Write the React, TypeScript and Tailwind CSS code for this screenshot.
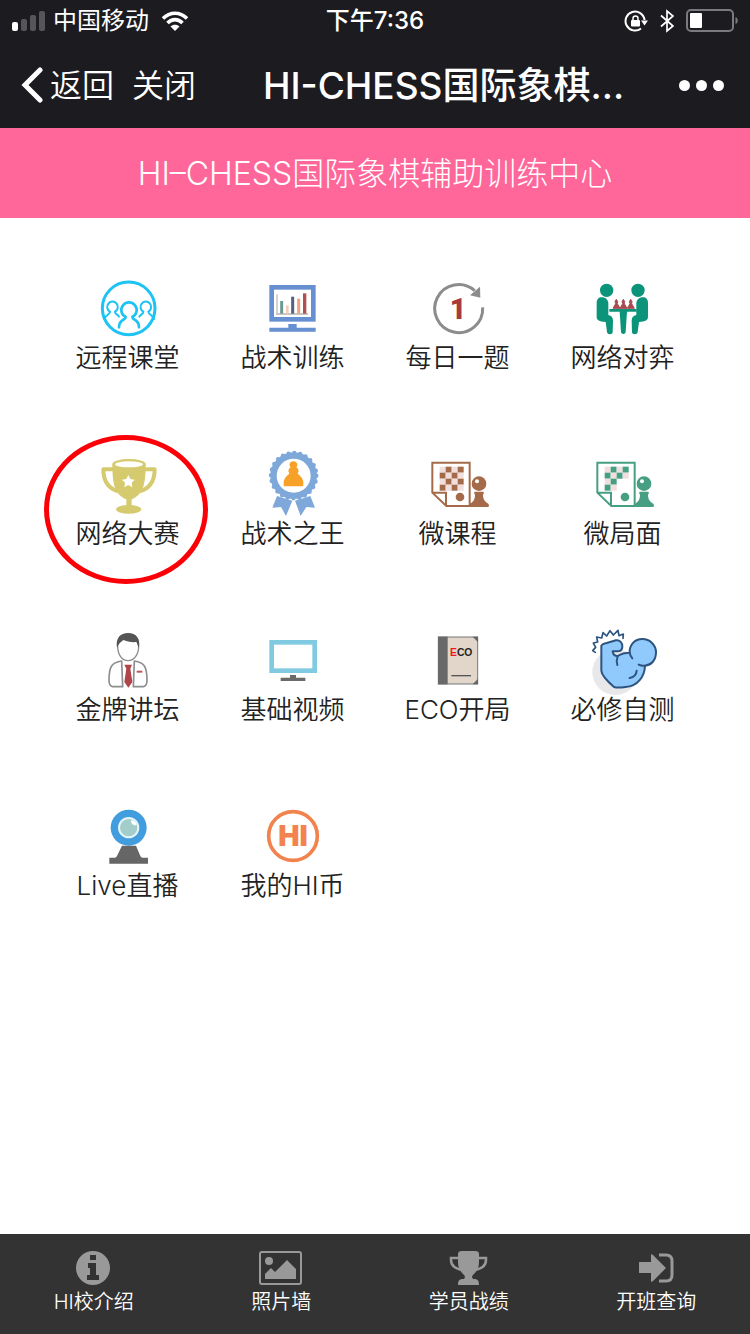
import type { ReactNode } from "react";

interface MenuItem {
  label: string;
  icon: ReactNode;
  marked?: boolean;
}

const BOARD = [0, 1, 2, 3];

function MenuSvg({ children }: { children: ReactNode }) {
  return (
    <svg viewBox="0 0 216 216" className="size-[72px]" fill="none" aria-hidden="true">
      {children}
    </svg>
  );
}

function ClassroomIcon() {
  return (
    <MenuSvg>
      <g stroke="#1cc3f4" strokeLinecap="round">
        <circle cx="110" cy="109" r="79" strokeWidth="9" />
        <g strokeWidth="6">
          <path d="M54 119a16 16 0 1 1 15 0c-1 8 8 7 12 15M54 119c1 8-12 8-17 22" />
          <path d="M154 119a16 16 0 1 1 15 0c-1 8 12 8 17 22M154 119c1 8-8 7-12 15" />
        </g>
        <path d="M101 135a23 23 0 1 1 20 0c-1 10 20 5 20 31M101 135c1 10-20 5-20 31" strokeWidth="8" />
      </g>
    </MenuSvg>
  );
}

function ChartMonitorIcon() {
  return (
    <MenuSvg>
      <rect x="44" y="46" width="125" height="96" stroke="#6690d2" strokeWidth="14" />
      <path d="M94 156h25v11h57v12H37v-12h57z" fill="#6690d2" />
      <path d="M57 126h96" stroke="#998b8b" strokeWidth="3" />
      <path d="M60 67v58" stroke="#c9c9c9" strokeWidth="5" />
      <path d="M74 87v38" stroke="#6b9a94" strokeWidth="9" />
      <path d="M91 100v25" stroke="#f3cdb8" strokeWidth="8" />
      <path d="M107 74v51" stroke="#56607e" strokeWidth="9" />
      <path d="M125 80v45" stroke="#f1a27c" strokeWidth="9" />
      <path d="M143 64v61" stroke="#b05050" strokeWidth="10" />
    </MenuSvg>
  );
}

function DailyIcon() {
  return (
    <MenuSvg>
      <path d="M182 106A72 72 0 1 1 158 56" stroke="#8c8c8c" strokeWidth="9" />
      <path d="M174 44l1 33-31-7z" fill="#8c8c8c" />
      <text x="108" y="142" textAnchor="middle" fontSize="86" fontWeight="900" fontFamily="Roboto, sans-serif" fill="#a63a3c">
        1
      </text>
    </MenuSvg>
  );
}

function Player() {
  return (
    <>
      <circle cx="59" cy="55" r="20" />
      <path d="M29 93c0-11 6-17 15-17 12 0 20 8 20 18v35c9 2 14 7 14 17l-1 34c0 9-16 9-17 0l-4-30c-20-2-27-6-27-16z" />
    </>
  );
}

function VersusIcon() {
  return (
    <MenuSvg>
      <g fill="#0b947a">
        <Player />
        <g transform="translate(212 0) scale(-1 1)">
          <Player />
        </g>
        <path d="M67 111h82v8h-29l-4 61c-1 8-13 8-14 0l-4-61H67z" />
      </g>
      <path d="M88 82l4 7-1 6 8 14H78l8-14-2-6zM109 82l4 7-1 6 8 14H99l8-14-2-6zM131 82l4 7-1 6 8 14h-21l8-14-2-6z" fill="#a84a50" stroke="#a84a50" strokeWidth="3" />
    </MenuSvg>
  );
}

function TrophyIcon() {
  return (
    <MenuSvg>
      <g fill="#d6ca6f">
        <path d="M64 64H34c0 36 14 57 44 66M158 64h30c0 36-14 57-44 66" fill="none" stroke="#d6ca6f" strokeWidth="12" strokeLinejoin="round" />
        <path d="M61 48c0 62 8 92 42 106v20c0 2 16 2 16 0v-20c34-14 42-44 42-106z" />
        <ellipse cx="111" cy="48" rx="50" ry="15" />
        <ellipse cx="110" cy="184" rx="38" ry="13" />
      </g>
      <ellipse cx="111" cy="49" rx="42" ry="9" fill="#fff" />
      <path d="M109 81l6 12 13 2-9 9 2 14-12-7-12 7 2-14-9-9 13-2z" fill="#fff" />
    </MenuSvg>
  );
}

function MedalIcon() {
  return (
    <MenuSvg>
      <g fill="#7ea8da">
        <path d="M60 144l46 14-19 46-15-27-26 2zM160 144l-46 14 17 46 17-27 26 2z" />
        <circle cx="110" cy="83" r="70" />
        <circle cx="110" cy="83" r="68" fill="none" stroke="#7ea8da" strokeWidth="13" strokeLinecap="round" strokeDasharray="0 17.8" />
      </g>
      <circle cx="110" cy="83" r="51" fill="#fff" />
      <path d="M109 40c12 0 15 13 9 18 5 3 6 7 7 11l-3 8c8 6 17 16 17 26v8c0 2-2 4-4 4H84c-2 0-4-2-4-4v-8c0-10 9-20 17-26l-3-8c1-4 2-8 7-11-6-5-4-18 8-18z" fill="#f8a128" />
    </MenuSvg>
  );
}

function LessonIcon({ color, partial = false }: { color: string; partial?: boolean }) {
  return (
    <MenuSvg>
      <path d="M31 44h112v130H73l-42-40zM31 134h41v40M73 174h127" stroke={color} strokeWidth="6" />
      {BOARD.map((row) =>
        BOARD.map((col) => {
          if (partial && (row + col > 4 || (row === 2 && col === 2))) return null;
          return (
            <rect
              key={`${row}-${col}`}
              x={53 + col * 18}
              y={56 + row * 18}
              width="18"
              height="18"
              fill={(row + col) % 2 ? color : "#f1dfdd"}
            />
          );
        })
      )}
      <g fill={color}>
        <circle cx="114" cy="147" r="13" />
        <circle cx="171" cy="107" r="22" />
        <path d="M157 131h28v8h-2c0 15 4 21 17 29v6h-57v-6c13-8 16-14 16-29h-2z" />
      </g>
      <circle cx="165" cy="100" r="6" fill="#fff" />
    </MenuSvg>
  );
}

function SpeakerIcon() {
  return (
    <MenuSvg>
      <path d="M77 67c0 25 13 43 31 43s32-18 32-43c0-24-12-36-32-36S77 43 77 67z" fill="#fff" stroke="#8b8b8b" strokeWidth="4" />
      <path d="M75 72c-5-31 11-45 33-45 25 0 39 18 32 45-3-7-4-13-7-18-14 2-31-3-38-6-7 4-15 10-20 24z" fill="#555" />
      <g stroke="#8b8f8f" strokeWidth="5" strokeLinejoin="round">
        <path d="M89 111l3 77H62c-7-1-11-8-11-19 0-39 7-54 38-58z" />
        <path d="M127 111l-3 77h30c7-1 11-8 11-19 0-39-7-54-38-58z" />
      </g>
      <path d="M97 122h23l-5 12 6 40-12 17-12-17 6-40z" fill="#b04448" />
      <path d="M134 143h17" stroke="#c4545c" strokeWidth="6" />
    </MenuSvg>
  );
}

function VideoIcon() {
  return (
    <MenuSvg>
      <rect x="44" y="55" width="129" height="85" stroke="#80cbe1" strokeWidth="14" />
      <path d="M99 153h18v8h28v10H71v-10h28z" fill="#6a6a6a" />
    </MenuSvg>
  );
}

function EcoBookIcon() {
  return (
    <MenuSvg>
      <rect x="49" y="39" width="118" height="141" fill="#e2d6ca" stroke="#777" strokeWidth="3" />
      <path d="M48 38h29v143H48z" fill="#696969" />
      <path d="M152 38h16v17zM152 181h16v-17z" fill="#666" />
      <text x="84" y="96" fontSize="31" fontWeight="800" fontFamily="Liberation Sans, sans-serif" fill="#222">
        <tspan fill="#f01818">E</tspan>CO
      </text>
      <path d="M88 155h59" stroke="#555" strokeWidth="4" />
    </MenuSvg>
  );
}

function MuscleIcon() {
  return (
    <MenuSvg>
      <circle cx="85" cy="144" r="69" fill="#e8e8eb" />
      <g stroke="#2d5480" strokeWidth="6" strokeLinecap="round" strokeLinejoin="round">
        <path
          d="M43 65c3-6 8-6 16-8l28-8c11-2 20 8 19 19 0 9-7 14-16 14h-13c1 8 7 14 15 14 11-7 22-10 36-10-1-24 15-41 38-41 23 0 41 18 41 40 0 24-14 38-33 40-1 32-22 62-59 64-14 2-24 3-34 0-21-18-37-36-38-49z"
          fill="#90c9fb"
        />
        <path d="M92 96c-3 9-4 18-1 27M128 86c1 7 3 12 8 17M155 122c6 3 12 4 19 3M149 140c-1 12-7 20-21 22" />
        <path d="M25 85l-8-5 9-10-7-13 13-3-3-15 15 3 4-16 11 10 10-16 10 13 14-14 3 16 13-5-1 13" strokeWidth="5" />
      </g>
    </MenuSvg>
  );
}

function WebcamIcon() {
  return (
    <MenuSvg>
      <circle cx="110" cy="83" r="54" fill="#419ddd" />
      <circle cx="110" cy="83" r="29" fill="#a2cdcb" stroke="#e4f4fa" strokeWidth="6" />
      <path d="M117 61c9 0 15 6 17 14-9 4-18-4-17-14z" fill="#fff" />
      <path d="M90 137h42l12 29c2 5 4 7 8 7h16v18H52v-18h16c4 0 6-2 8-7z" fill="#666" />
    </MenuSvg>
  );
}

function CoinIcon() {
  return (
    <MenuSvg>
      <circle cx="108" cy="108" r="73" stroke="#f2834e" strokeWidth="11" />
      <text x="108" y="138" textAnchor="middle" fontSize="85" fontWeight="900" fontFamily="Inter, sans-serif" fill="#f2834e">
        HI
      </text>
    </MenuSvg>
  );
}

const menu: MenuItem[] = [
  { label: "远程课堂", icon: <ClassroomIcon /> },
  { label: "战术训练", icon: <ChartMonitorIcon /> },
  { label: "每日一题", icon: <DailyIcon /> },
  { label: "网络对弈", icon: <VersusIcon /> },
  { label: "网络大赛", icon: <TrophyIcon />, marked: true },
  { label: "战术之王", icon: <MedalIcon /> },
  { label: "微课程", icon: <LessonIcon color="#a56a4a" /> },
  { label: "微局面", icon: <LessonIcon color="#469f82" partial /> },
  { label: "金牌讲坛", icon: <SpeakerIcon /> },
  { label: "基础视频", icon: <VideoIcon /> },
  { label: "ECO开局", icon: <EcoBookIcon /> },
  { label: "必修自测", icon: <MuscleIcon /> },
  { label: "Live直播", icon: <WebcamIcon /> },
  { label: "我的HI币", icon: <CoinIcon /> },
];

const tabs: MenuItem[] = [
  {
    label: "HI校介绍",
    icon: (
      <>
        <circle cx="23" cy="20" r="17" fill="#999" />
        <path d="M20 7h6v5h-6zM18 15h8v12h3v5H17v-5h3v-7h-2z" fill="#333" />
      </>
    ),
  },
  {
    label: "照片墙",
    icon: (
      <>
        <rect x="3" y="4" width="41" height="32" rx="2" fill="none" stroke="#999" strokeWidth="2" />
        <circle cx="12" cy="13" r="4" fill="#999" />
        <path d="M8 31v-5l6-6 4 4 12-12 9 9v10z" fill="#999" />
      </>
    ),
  },
  {
    label: "学员战绩",
    icon: (
      <>
        <path d="M15 10H6v2c0 6 5 9 12 10M32 10h9v2c0 6-5 9-12 10" fill="none" stroke="#999" strokeWidth="2.5" />
        <path d="M17 3h13c3 0 4 1 4 3v8c0 6-2 9-5 12-3 2-2 5 0 5 4 0 5 2 5 6H13c0-4 1-6 5-6 2 0 3-3 0-5-3-3-5-6-5-12V6c0-2 1-3 4-3z" fill="#999" />
      </>
    ),
  },
  {
    label: "开班查询",
    icon: (
      <>
        <path d="M8 14h11V7c0-1 1-1 2 0l12 12c1 1 1 1 0 2L21 33c-1 1-2 1-2 0v-8H8c-1 0-1 0-1-1v-9c0-1 0-1 1-1z" fill="#999" />
        <path d="M27 7h7c4 0 6 2 6 6v14c0 4-2 6-6 6h-7" fill="none" stroke="#999" strokeWidth="3" />
      </>
    ),
  },
];

function StatusBar() {
  return (
    <div className="grid h-[42px] grid-cols-3 items-center px-3 text-2xl leading-none">
      <div className="flex items-center gap-2">
        <svg viewBox="0 0 33 20" className="h-5 w-[33px]" aria-hidden="true">
          <rect y="11" width="6" height="9" rx="2" fill="#fff" />
          <rect x="9" y="8" width="6" height="12" rx="2" fill="#56555a" />
          <rect x="18" y="4" width="6" height="16" rx="2" fill="#56555a" />
          <rect x="27" width="6" height="20" rx="2" fill="#56555a" />
        </svg>
        <span>中国移动</span>
        <svg viewBox="0 0 28 20" className="ml-1 h-5 w-7 shrink-0" aria-hidden="true">
          <path d="M2 7.500c7-7 17-7 24 0M6.500 12c4.500-4.500 10.500-4.500 15 0" fill="none" stroke="#fff" strokeWidth="3.600" />
          <path d="M14 20l-4.500-4.500c2.500-2.500 6.500-2.500 9 0z" fill="#fff" />
        </svg>
      </div>
      <time className="text-center font-medium">下午7:36</time>
      <div className="flex items-center justify-end">
        <svg viewBox="0 0 24 24" className="mr-3 size-6" fill="none" stroke="#fff" strokeWidth="2" aria-hidden="true">
          <path d="M17 19.500A9.500 9.500 0 1 1 20.500 11" />
          <path d="M17 11.500h7l-3.500 5z" fill="#fff" stroke="none" />
          <rect x="7" y="11" width="9" height="6.500" rx="1" fill="#fff" stroke="none" />
          <path d="M9 11.500V9.500a2.500 2.500 0 0 1 5 0v2" strokeWidth="1.500" />
        </svg>
        <svg viewBox="0 0 14 24" className="mr-3 h-6 w-3.5" fill="none" stroke="#fff" strokeWidth="1.700" aria-hidden="true">
          <path d="M1 6.500l12 10.500-6 5V2l6 5L1 17.500" />
        </svg>
        <svg viewBox="0 0 54 24" className="-mr-0.5 h-6 w-[54px]" aria-hidden="true">
          <rect x="1" y="1" width="46" height="21" rx="4" fill="none" stroke="#7b7a7f" strokeWidth="2" />
          <rect x="4" y="4" width="12" height="15" rx="1" fill="#fff" />
          <path d="M49.500 8c3 1 3 6 0 7z" fill="#7b7a7f" />
        </svg>
      </div>
    </div>
  );
}

function NavBar() {
  return (
    <header className="flex h-[86px] items-center px-5 text-[32px] leading-none">
      <button className="flex items-center gap-1.5">
        <svg viewBox="0 0 24 36" className="h-9 w-6" fill="none" stroke="#fff" strokeWidth="5" aria-hidden="true">
          <path d="M20 3L5 18l15 15" strokeLinecap="round" />
        </svg>
        <span className="pt-0.5 font-[350]">返回</span>
      </button>
      <button className="ml-[18px] pt-0.5 font-[350]">关闭</button>
      <h1 className="flex-1 pl-5 text-center text-[37px] leading-none font-medium">HI-CHESS国际象棋...</h1>
      <button aria-label="更多" className="-mr-0.5 flex gap-1.5 p-2">
        <span className="size-[11px] rounded-full bg-white" />
        <span className="size-[11px] rounded-full bg-white" />
        <span className="size-[11px] rounded-full bg-white" />
      </button>
    </header>
  );
}

export default function App() {
  return (
    <div className="flex min-h-screen flex-col bg-white font-['Inter','Noto_Sans_CJK_SC',sans-serif]">
      <div className="bg-[#1c1b20] text-white">
        <StatusBar />
        <NavBar />
      </div>
      <div className="flex h-[90px] items-center justify-center bg-[#ff6699] pt-0.5 text-[32px] leading-none font-light text-white">
        HI–CHESS国际象棋辅助训练中心
      </div>

      <main className="flex-1 px-[6%] pt-[54px]">
        <nav className="grid grid-cols-4 gap-y-[76px]">
          {menu.map((item) => (
            <a key={item.label} href="#" className="relative flex flex-col items-center text-[26px] leading-7 font-[350] text-[#222]">
              {item.icon}
              <span>{item.label}</span>
              {item.marked && (
                <span className="absolute -top-[13px] left-[49%] h-[149px] w-[164px] -translate-x-1/2 rounded-[50%] border-5 border-[#fb0007]" />
              )}
            </a>
          ))}
        </nav>
      </main>

      <footer className="grid h-[100px] grid-cols-4 bg-[#333] pt-3.5">
        {tabs.map((tab) => (
          <a key={tab.label} href="#" className="flex flex-col items-center gap-0.5 text-xl leading-6 font-[350] text-white">
            <svg viewBox="0 0 48 40" className="h-10 w-12" aria-hidden="true">
              {tab.icon}
            </svg>
            <span>{tab.label}</span>
          </a>
        ))}
      </footer>
    </div>
  );
}
